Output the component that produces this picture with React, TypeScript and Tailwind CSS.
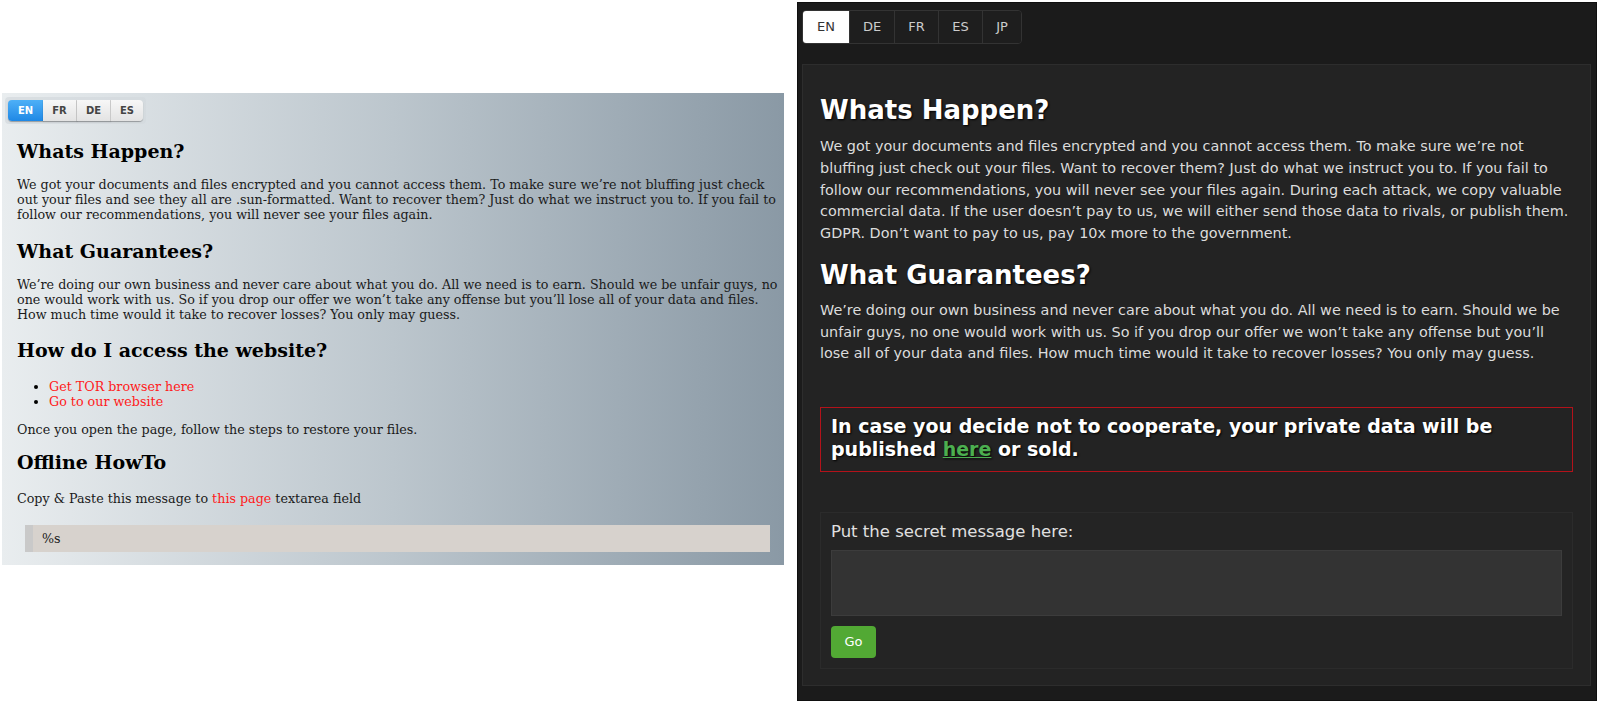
export default function App() {
  const leftTabs = ['EN', 'FR', 'DE', 'ES']
  const rightTabs = [
    { label: 'EN', w: 'w-[46px]' },
    { label: 'DE', w: 'w-[45px]' },
    { label: 'FR', w: 'w-[44px]' },
    { label: 'ES', w: 'w-[44px]' },
    { label: 'JP', w: 'w-[39px]' },
  ]

  const serif = "font-['DejaVu_Serif','Liberation_Serif',serif]"
  const sans = "font-['DejaVu_Sans','Liberation_Sans',sans-serif]"

  return (
    <div className="w-[1600px] h-[703px] bg-white flex overflow-hidden">
      {/* old note */}
      <div className="pt-[93px] pl-[2px] w-[784px] shrink-0">
        <div
          className={`h-[472px] bg-gradient-to-r from-[#e9edef] via-[#bcc6cd] to-[#8a99a5] ${serif} text-[12.7px] leading-[15px] text-[#1a1a1a] flex flex-col`}
        >
          <div className="mt-[4px] ml-[3px] self-start flex p-[3px] rounded bg-[#d3d9dd]/70">
            {leftTabs.map((t) => (
              <div
                key={t}
                className={`h-[21px] flex items-center justify-center ${sans} text-[10px] font-bold ${
                  t === 'EN'
                    ? 'w-[35px] rounded-l-sm bg-gradient-to-b from-[#4db0f7] to-[#1e88e5] text-white shadow-[0_1px_1px_rgba(0,0,0,0.3)]'
                    : t === 'ES'
                    ? 'w-[32px] rounded-r-sm bg-gradient-to-b from-[#f7f7f7] to-[#e3e3e3] text-[#444] shadow-[0_1px_1px_rgba(0,0,0,0.3)]'
                    : 'w-[34px] border-r border-[#cfcfcf] bg-gradient-to-b from-[#f7f7f7] to-[#e3e3e3] text-[#444] shadow-[0_1px_1px_rgba(0,0,0,0.3)]'
                }`}
              >
                {t}
              </div>
            ))}
          </div>

          <div className="pl-[15px] pr-[3px]">
            <h2 className="mt-[16px] text-[19px] leading-[23px] font-bold text-black">Whats Happen?</h2>
            <p className="mt-[14px]">
              We got your documents and files encrypted and you cannot access them. To make sure we’re not bluffing just check
              out your files and see they all are .sun-formatted. Want to recover them? Just do what we instruct you to. If you fail to
              follow our recommendations, you will never see your files again.
            </p>
            <h2 className="mt-[18px] text-[19px] leading-[23px] font-bold text-black">What Guarantees?</h2>
            <p className="mt-[14px]">
              We’re doing our own business and never care about what you do. All we need is to earn. Should we be unfair guys, no
              one would work with us. So if you drop our offer we won’t take any offense but you’ll lose all of your data and files.
              How much time would it take to recover losses? You only may guess.
            </p>
            <h2 className="mt-[17px] text-[19px] leading-[23px] font-bold text-black">How do I access the website?</h2>
            <ul className="mt-[17px] pl-[32px] list-disc text-[#ff1a1a]">
              <li className="marker:text-black">Get TOR browser here</li>
              <li className="marker:text-black">Go to our website</li>
            </ul>
            <p className="mt-[13px]">Once you open the page, follow the steps to restore your files.</p>
            <h2 className="mt-[14px] text-[19px] leading-[23px] font-bold text-black">Offline HowTo</h2>
            <p className="mt-[17px]">
              Copy &amp; Paste this message to <span className="text-[#ff1a1a]">this page</span> textarea field
            </p>
          </div>

          <div className="mt-[19px] ml-[23px] mr-[14px] h-[27px] flex items-center bg-[#d7d2cd] border-l-[8px] border-[#c9c9c9] pl-[9px]">
            %s
          </div>
        </div>
      </div>

      {/* new note */}
      <div
        className={`ml-[13px] mt-[2px] w-[800px] h-[699px] shrink-0 bg-[#1b1b1b] border border-[#0f0f0f] ${sans} flex flex-col`}
      >
        <div className="mt-[7px] ml-[4px] self-start flex border border-[#333] rounded-sm overflow-hidden">
          {rightTabs.map((t, i) => (
            <div
              key={t.label}
              className={`${t.w} h-[32px] flex items-center justify-center text-[13px] ${
                i === 0 ? 'bg-white text-[#333]' : 'bg-[#1e1e1e] text-[#ccc] border-l border-[#333]'
              }`}
            >
              {t.label}
            </div>
          ))}
        </div>

        <div className="mt-[20px] ml-[4px] mr-[5px] h-[622px] bg-[#232323] border border-[#2d2d2d] px-[17px] text-[#dcdcdc]">
          <h2 className="mt-[30px] text-[26px] leading-[30px] font-bold text-white [text-shadow:1px_1px_2px_#000]">
            Whats Happen?
          </h2>
          <p className="mt-[11px] text-[14.4px] leading-[21.75px]">
            We got your documents and files encrypted and you cannot access them. To make sure we’re not bluffing just check out
            your files. Want to recover them? Just do what we instruct you to. If you fail to follow our recommendations, you will
            never see your files again. During each attack, we copy valuable commercial data. If the user doesn’t pay to us, we
            will either send those data to rivals, or publish them. GDPR. Don’t want to pay to us, pay 10x more to the government.
          </p>
          <h2 className="mt-[15px] text-[26px] leading-[30px] font-bold text-white [text-shadow:1px_1px_2px_#000]">
            What Guarantees?
          </h2>
          <p className="mt-[10px] text-[14.4px] leading-[21.75px]">
            We’re doing our own business and never care about what you do. All we need is to earn. Should we be unfair guys, no one
            would work with us. So if you drop our offer we won’t take any offense but you’ll lose all of your data and files. How
            much time would it take to recover losses? You only may guess.
          </p>

          <div className="mt-[42px] border border-[#b3121a] pt-[7px] pb-[10px] px-[10px]">
            <p className="text-[19px] leading-[23px] font-bold text-white [text-shadow:1px_1px_2px_#000]">
              In case you decide not to cooperate, your private data will be published{' '}
              <span className="text-[#4caf50] underline">here</span> or sold.
            </p>
          </div>

          <div className="mt-[40px] border border-[#2b2b2b] bg-[#242424] pt-[7px] pb-[10px] px-[10px]">
            <div className="text-[16.5px] leading-[24px] text-[#e0e0e0]">Put the secret message here:</div>
            <div className="mt-[6px] h-[66px] bg-[#333] border border-[#3c3c3c]" />
            <button className="mt-[10px] w-[45px] h-[32px] rounded-sm bg-[#52a934] text-white text-[13px]">Go</button>
          </div>
        </div>
      </div>
    </div>
  )
}
